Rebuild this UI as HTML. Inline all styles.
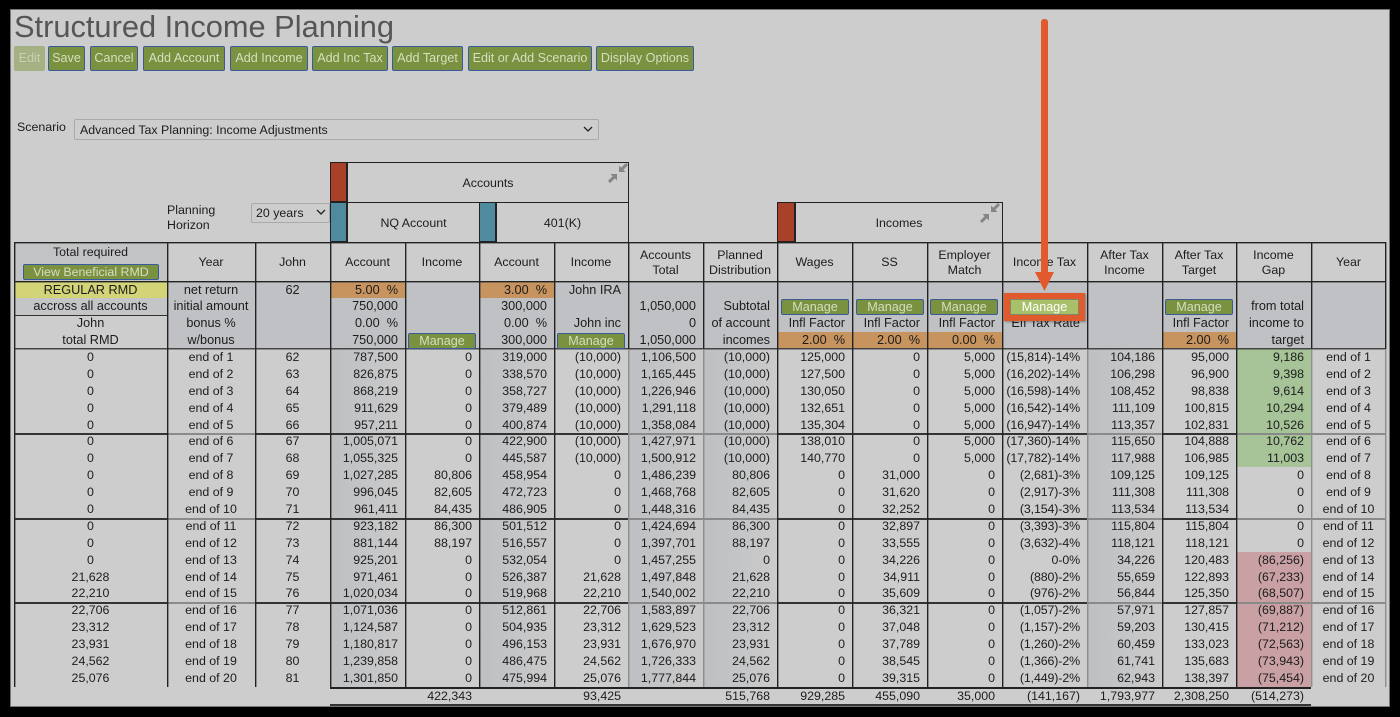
<!DOCTYPE html>
<html><head><meta charset="utf-8"><title>Structured Income Planning</title>
<style>
html,body{margin:0;padding:0;background:#000;width:1400px;height:717px;overflow:hidden}
body{font-family:"Liberation Sans",sans-serif;color:#1c1c1c;font-size:12.4px}
#p{position:absolute;left:11px;top:10px;width:1378px;height:696px;background:#cdcdcd;box-shadow:0 0 0 1px #777}
.a{position:absolute}
#t{position:absolute;left:14px;top:9px;font-size:30.8px;line-height:36px;color:#565656;white-space:nowrap}
.b{position:absolute;box-sizing:border-box;background:#7a9140;border:1.5px solid #3a5a9e;border-radius:2px;color:#d6dfc0;text-align:center;white-space:nowrap}
.top{top:46px;height:25px;line-height:23px;font-size:12.6px}
.m{height:16px;line-height:15px;font-size:12.6px}
.grid{position:absolute;left:14px;display:grid;grid-template-columns:153px 88px 75px 75px 74px 75px 74px 75px 74px 75px 75px 75px 85px 75px 74px 75px 75px;width:1372px}
.grid span{display:block;white-space:nowrap;text-align:right;padding-right:7px;box-sizing:border-box;min-width:0}
.grid span:nth-child(1),.grid span:nth-child(2),.grid span:nth-child(3),.grid span:nth-child(17){text-align:center;padding-right:0}
.d{height:16.9px;line-height:16.9px}
.d span:nth-child(4),.d span:nth-child(6),.d span:nth-child(8),.d span:nth-child(9),.d span:nth-child(14){background:linear-gradient(90deg,#bdbfc2,#cbcbcb)}
.d span:nth-child(13){letter-spacing:-.12px}
.pm{height:17px;line-height:17px;grid-template-rows:17px;font-size:12.7px}
.pm span{background:#bfc1c4}
.pm span:nth-child(1){background:#c4c5c7}
.pm .l{background:#cdcdcd!important}
.pm .y{background:#d3d377!important}
.pm .o{background:#c7935e!important}
.g{background:#a6c498}
.r{background:#c9a1a5}
#h{top:242px;height:39px}
#h span{display:flex;height:39px;align-items:center;justify-content:center;text-align:center;line-height:15px;padding:2px 0 0;background:#cdcdcd}
#h span:first-child{background:#c2c3c5}
.tot{top:688px;height:16px;line-height:17px}
.v{position:absolute;width:1px;background:#222;box-shadow:1px 0 0 rgba(40,40,40,.4)}
.v.n{background:#8e8e8e;box-shadow:1px 0 0 rgba(140,140,140,.4)}
.h{position:absolute;left:14px;width:1372px;height:1px;background:#222;box-shadow:0 1px 0 rgba(40,40,40,.4)}
.gl{box-shadow:none;height:2px;background:linear-gradient(90deg,#333 153px,#8a8a8a 153px,#8a8a8a 241px,#333 241px,#333 614px,#8a8a8a 614px,#8a8a8a 763px,#333 763px,#333 1073px,#8a8a8a 1073px,#8a8a8a 1148px,#333 1148px,#333 1222px,#8a8a8a 1222px)}
.bx{position:absolute;box-sizing:border-box;border:1px solid #222;border-bottom:0;text-align:center;background:#cdcdcd}
.sel{position:absolute;box-sizing:border-box;background:#cdcdcd;border:1.5px solid #aaa;border-radius:2px;white-space:nowrap}
.rw{position:relative;left:0}
</style></head><body>
<div id="p"></div>
<div id="t">Structured Income Planning</div>
<div class="b top" style="left:14px;width:31px;background:#a3b183;border-color:#a3b183;color:#c9d0b4">Edit</div>
<div class="b top" style="left:48px;width:37px">Save</div>
<div class="b top" style="left:90px;width:48px">Cancel</div>
<div class="b top" style="left:143px;width:82px">Add Account</div>
<div class="b top" style="left:230px;width:78px">Add Income</div>
<div class="b top" style="left:312px;width:76px">Add Inc Tax</div>
<div class="b top" style="left:392px;width:71px">Add Target</div>
<div class="b top" style="left:468px;width:124px">Edit or Add Scenario</div>
<div class="b top" style="left:596px;width:98px">Display Options</div>

<div class="a" style="left:17px;top:120px;line-height:15px">Scenario</div>
<div class="sel" style="left:74px;top:119px;width:525px;height:21px;line-height:20px;padding-left:5px">Advanced Tax Planning: Income Adjustments
<svg class="a" style="right:5px;top:6px" width="10" height="7" viewBox="0 0 10 7"><path d="M1 1l4 4 4-4" fill="none" stroke="#222" stroke-width="1.300"/></svg></div>

<div class="a" style="left:167px;top:203px;line-height:15px">Planning<br>Horizon</div>
<div class="sel" style="left:251px;top:203px;width:79px;height:20px;line-height:19px;padding-left:4px">20 years
<svg class="a" style="right:3px;top:5px" width="10" height="7" viewBox="0 0 10 7"><path d="M1 1l4 4 4-4" fill="none" stroke="#222" stroke-width="1.300"/></svg></div>

<div class="bx" style="left:347px;top:162px;width:282px;height:41px;line-height:41px">Accounts</div>
<div class="bx" style="left:347px;top:202px;width:133px;height:41px;line-height:41px">NQ Account</div>
<div class="bx" style="left:496px;top:202px;width:133px;height:41px;line-height:41px">401(K)</div>
<div class="bx" style="left:795px;top:202px;width:208px;height:41px;line-height:41px">Incomes</div>
<div class="a" style="left:330px;top:162px;width:17px;height:40px;background:#a8402a;outline:1px solid #222;outline-offset:-1px"></div>
<div class="a" style="left:330px;top:202px;width:17px;height:40px;background:#4f8a9e;outline:1px solid #222;outline-offset:-1px"></div>
<div class="a" style="left:479px;top:202px;width:17px;height:40px;background:#4f8a9e;outline:1px solid #222;outline-offset:-1px"></div>
<div class="a" style="left:777px;top:202px;width:18px;height:40px;background:#a8402a;outline:1px solid #222;outline-offset:-1px"></div>
<svg class="a" style="left:608px;top:163px" width="20" height="20" viewBox="0 0 20 20"><path d="M1 19l6-6M19 1l-6 6" stroke="#858585" stroke-width="3" fill="none"/><path d="M2.500 11H9v6.500zM17.500 9H11V2.500z" fill="#858585"/></svg>
<svg class="a" style="left:980px;top:203px" width="20" height="20" viewBox="0 0 20 20"><path d="M1 19l6-6M19 1l-6 6" stroke="#858585" stroke-width="3" fill="none"/><path d="M2.500 11H9v6.500zM17.500 9H11V2.500z" fill="#858585"/></svg>

<div class="grid" id="h"><span style="align-items:flex-start;padding-top:3px">Total required</span><span>Year</span><span>John</span><span>Account</span><span>Income</span><span>Account</span><span>Income</span><span>Accounts<br>Total</span><span>Planned<br>Distribution</span><span>Wages</span><span>SS</span><span>Employer<br>Match</span><span>Income Tax</span><span>After Tax<br>Income</span><span>After Tax<br>Target</span><span>Income<br>Gap</span><span>Year</span></div>

<div class="grid pm" style="top:281px;line-height:19px"><span class="y">REGULAR RMD</span><span>net return</span><span>62</span><span class="o">5.00&nbsp;&nbsp;%</span><span></span><span class="o">3.00&nbsp;&nbsp;%</span><span>John IRA</span><span></span><span></span><span></span><span></span><span></span><span></span><span></span><span></span><span></span><span></span></div>
<div class="grid pm" style="top:298px"><span>accross all accounts</span><span>initial amount</span><span></span><span>750,000</span><span></span><span>300,000</span><span></span><span>1,050,000</span><span>Subtotal</span><span></span><span></span><span></span><span></span><span></span><span></span><span>from total</span><span></span></div>
<div class="grid pm" style="top:315px"><span class="l">John</span><span>bonus %</span><span></span><span>0.00&nbsp;&nbsp;%</span><span></span><span>0.00&nbsp;&nbsp;%</span><span>John inc</span><span>0</span><span>of account</span><span>Infl Factor</span><span>Infl Factor</span><span>Infl Factor</span><span>Eff Tax Rate</span><span></span><span>Infl Factor</span><span>income to</span><span></span></div>
<div class="grid pm" style="top:332px"><span class="l">total RMD</span><span>w/bonus</span><span></span><span>750,000</span><span></span><span>300,000</span><span></span><span>1,050,000</span><span>incomes</span><span class="o">2.00&nbsp;&nbsp;%</span><span class="o">2.00&nbsp;&nbsp;%</span><span class="o">0.00&nbsp;&nbsp;%</span><span></span><span></span><span class="o">2.00&nbsp;&nbsp;%</span><span>target</span><span></span></div>

<div class="grid" style="top:349px;display:block">
<div class="grid d rw"><span>0</span><span>end of 1</span><span>62</span><span>787,500</span><span>0</span><span>319,000</span><span>(10,000)</span><span>1,106,500</span><span>(10,000)</span><span>125,000</span><span>0</span><span>5,000</span><span>(15,814)-14%</span><span>104,186</span><span>95,000</span><span class="g">9,186</span><span>end of 1</span></div>
<div class="grid d rw"><span>0</span><span>end of 2</span><span>63</span><span>826,875</span><span>0</span><span>338,570</span><span>(10,000)</span><span>1,165,445</span><span>(10,000)</span><span>127,500</span><span>0</span><span>5,000</span><span>(16,202)-14%</span><span>106,298</span><span>96,900</span><span class="g">9,398</span><span>end of 2</span></div>
<div class="grid d rw"><span>0</span><span>end of 3</span><span>64</span><span>868,219</span><span>0</span><span>358,727</span><span>(10,000)</span><span>1,226,946</span><span>(10,000)</span><span>130,050</span><span>0</span><span>5,000</span><span>(16,598)-14%</span><span>108,452</span><span>98,838</span><span class="g">9,614</span><span>end of 3</span></div>
<div class="grid d rw"><span>0</span><span>end of 4</span><span>65</span><span>911,629</span><span>0</span><span>379,489</span><span>(10,000)</span><span>1,291,118</span><span>(10,000)</span><span>132,651</span><span>0</span><span>5,000</span><span>(16,542)-14%</span><span>111,109</span><span>100,815</span><span class="g">10,294</span><span>end of 4</span></div>
<div class="grid d rw"><span>0</span><span>end of 5</span><span>66</span><span>957,211</span><span>0</span><span>400,874</span><span>(10,000)</span><span>1,358,084</span><span>(10,000)</span><span>135,304</span><span>0</span><span>5,000</span><span>(16,947)-14%</span><span>113,357</span><span>102,831</span><span class="g">10,526</span><span>end of 5</span></div>
<div class="grid d rw"><span>0</span><span>end of 6</span><span>67</span><span>1,005,071</span><span>0</span><span>422,900</span><span>(10,000)</span><span>1,427,971</span><span>(10,000)</span><span>138,010</span><span>0</span><span>5,000</span><span>(17,360)-14%</span><span>115,650</span><span>104,888</span><span class="g">10,762</span><span>end of 6</span></div>
<div class="grid d rw"><span>0</span><span>end of 7</span><span>68</span><span>1,055,325</span><span>0</span><span>445,587</span><span>(10,000)</span><span>1,500,912</span><span>(10,000)</span><span>140,770</span><span>0</span><span>5,000</span><span>(17,782)-14%</span><span>117,988</span><span>106,985</span><span class="g">11,003</span><span>end of 7</span></div>
<div class="grid d rw"><span>0</span><span>end of 8</span><span>69</span><span>1,027,285</span><span>80,806</span><span>458,954</span><span>0</span><span>1,486,239</span><span>80,806</span><span>0</span><span>31,000</span><span>0</span><span>(2,681)-3%</span><span>109,125</span><span>109,125</span><span>0</span><span>end of 8</span></div>
<div class="grid d rw"><span>0</span><span>end of 9</span><span>70</span><span>996,045</span><span>82,605</span><span>472,723</span><span>0</span><span>1,468,768</span><span>82,605</span><span>0</span><span>31,620</span><span>0</span><span>(2,917)-3%</span><span>111,308</span><span>111,308</span><span>0</span><span>end of 9</span></div>
<div class="grid d rw"><span>0</span><span>end of 10</span><span>71</span><span>961,411</span><span>84,435</span><span>486,905</span><span>0</span><span>1,448,316</span><span>84,435</span><span>0</span><span>32,252</span><span>0</span><span>(3,154)-3%</span><span>113,534</span><span>113,534</span><span>0</span><span>end of 10</span></div>
<div class="grid d rw"><span>0</span><span>end of 11</span><span>72</span><span>923,182</span><span>86,300</span><span>501,512</span><span>0</span><span>1,424,694</span><span>86,300</span><span>0</span><span>32,897</span><span>0</span><span>(3,393)-3%</span><span>115,804</span><span>115,804</span><span>0</span><span>end of 11</span></div>
<div class="grid d rw"><span>0</span><span>end of 12</span><span>73</span><span>881,144</span><span>88,197</span><span>516,557</span><span>0</span><span>1,397,701</span><span>88,197</span><span>0</span><span>33,555</span><span>0</span><span>(3,632)-4%</span><span>118,121</span><span>118,121</span><span>0</span><span>end of 12</span></div>
<div class="grid d rw"><span>0</span><span>end of 13</span><span>74</span><span>925,201</span><span>0</span><span>532,054</span><span>0</span><span>1,457,255</span><span>0</span><span>0</span><span>34,226</span><span>0</span><span>0-0%</span><span>34,226</span><span>120,483</span><span class="r">(86,256)</span><span>end of 13</span></div>
<div class="grid d rw"><span>21,628</span><span>end of 14</span><span>75</span><span>971,461</span><span>0</span><span>526,387</span><span>21,628</span><span>1,497,848</span><span>21,628</span><span>0</span><span>34,911</span><span>0</span><span>(880)-2%</span><span>55,659</span><span>122,893</span><span class="r">(67,233)</span><span>end of 14</span></div>
<div class="grid d rw"><span>22,210</span><span>end of 15</span><span>76</span><span>1,020,034</span><span>0</span><span>519,968</span><span>22,210</span><span>1,540,002</span><span>22,210</span><span>0</span><span>35,609</span><span>0</span><span>(976)-2%</span><span>56,844</span><span>125,350</span><span class="r">(68,507)</span><span>end of 15</span></div>
<div class="grid d rw"><span>22,706</span><span>end of 16</span><span>77</span><span>1,071,036</span><span>0</span><span>512,861</span><span>22,706</span><span>1,583,897</span><span>22,706</span><span>0</span><span>36,321</span><span>0</span><span>(1,057)-2%</span><span>57,971</span><span>127,857</span><span class="r">(69,887)</span><span>end of 16</span></div>
<div class="grid d rw"><span>23,312</span><span>end of 17</span><span>78</span><span>1,124,587</span><span>0</span><span>504,935</span><span>23,312</span><span>1,629,523</span><span>23,312</span><span>0</span><span>37,048</span><span>0</span><span>(1,157)-2%</span><span>59,203</span><span>130,415</span><span class="r">(71,212)</span><span>end of 17</span></div>
<div class="grid d rw"><span>23,931</span><span>end of 18</span><span>79</span><span>1,180,817</span><span>0</span><span>496,153</span><span>23,931</span><span>1,676,970</span><span>23,931</span><span>0</span><span>37,789</span><span>0</span><span>(1,260)-2%</span><span>60,459</span><span>133,023</span><span class="r">(72,563)</span><span>end of 18</span></div>
<div class="grid d rw"><span>24,562</span><span>end of 19</span><span>80</span><span>1,239,858</span><span>0</span><span>486,475</span><span>24,562</span><span>1,726,333</span><span>24,562</span><span>0</span><span>38,545</span><span>0</span><span>(1,366)-2%</span><span>61,741</span><span>135,683</span><span class="r">(73,943)</span><span>end of 19</span></div>
<div class="grid d rw"><span>25,076</span><span>end of 20</span><span>81</span><span>1,301,850</span><span>0</span><span>475,994</span><span>25,076</span><span>1,777,844</span><span>25,076</span><span>0</span><span>39,315</span><span>0</span><span>(1,449)-2%</span><span>62,943</span><span>138,397</span><span class="r">(75,454)</span><span>end of 20</span></div>
</div>

<div class="grid tot"><span></span><span></span><span></span><span></span><span>422,343</span><span></span><span>93,425</span><span></span><span>515,768</span><span>929,285</span><span>455,090</span><span></span><span>(141,167)</span><span>1,793,977</span><span>2,308,250</span><span>(514,273)</span><span></span></div>
<div class="a" style="left:927px;top:688px;width:68px;line-height:17px;text-align:right">35,000</div>

<div class="h" style="top:242px"></div>
<div class="h" style="top:281px"></div>
<div class="h" style="top:348px;background:#444"></div>
<div class="a" style="left:14px;top:315px;width:153px;height:1px;background:#333"></div>
<div class="h gl" style="top:433px"></div>
<div class="h gl" style="top:518px"></div>
<div class="h gl" style="top:602px"></div>
<div class="a" style="left:330px;top:687px;width:981px;height:2px;background:#222"></div>
<div class="a" style="left:330px;top:704px;width:981px;height:2px;background:#333"></div>

<div class="v" style="left:14px;top:242px;height:445px"></div>
<div class="v" style="left:167px;top:242px;height:445px"></div>
<div class="v" style="left:255px;top:242px;height:445px"></div>
<div class="v" style="left:330px;top:242px;height:445px"></div>
<div class="v" style="left:405px;top:242px;height:445px"></div>
<div class="v" style="left:479px;top:242px;height:445px"></div>
<div class="v" style="left:554px;top:242px;height:445px"></div>
<div class="v" style="left:628px;top:242px;height:107px"></div>
<div class="v n" style="left:628px;top:349px;height:338px"></div>
<div class="v" style="left:703px;top:242px;height:107px"></div>
<div class="v n" style="left:703px;top:349px;height:338px"></div>
<div class="v" style="left:777px;top:242px;height:445px"></div>
<div class="v" style="left:852px;top:242px;height:445px"></div>
<div class="v" style="left:927px;top:242px;height:445px"></div>
<div class="v" style="left:1002px;top:242px;height:445px"></div>
<div class="v" style="left:1087px;top:242px;height:107px"></div>
<div class="v n" style="left:1087px;top:349px;height:338px"></div>
<div class="v" style="left:1162px;top:242px;height:445px"></div>
<div class="v" style="left:1236px;top:242px;height:445px"></div>
<div class="v" style="left:1311px;top:242px;height:107px"></div>
<div class="v n" style="left:1311px;top:349px;height:338px"></div>
<div class="v" style="left:1385px;top:242px;height:107px"></div>
<div class="v n" style="left:1385px;top:349px;height:338px"></div>

<div class="b" style="left:23px;top:264px;width:136px;height:16px;line-height:15px">View Beneficial RMD</div>
<div class="b m" style="left:408px;top:333px;width:68px">Manage</div>
<div class="b m" style="left:557px;top:333px;width:68px">Manage</div>
<div class="b m" style="left:781px;top:299px;width:68px">Manage</div>
<div class="b m" style="left:856px;top:299px;width:68px">Manage</div>
<div class="b m" style="left:930px;top:299px;width:68px">Manage</div>
<div class="b m" style="left:1165px;top:299px;width:68px">Manage</div>

<div class="a" style="left:1041px;top:19px;width:7px;height:256px;background:#e05a2e;border-radius:3px 3px 0 0"></div>
<svg class="a" style="left:1035px;top:272px" width="19" height="19" viewBox="0 0 19 19"><path d="M0 0H19L9.500 19Z" fill="#e05a2e"/></svg>
<div class="a" style="left:1004px;top:293px;width:81px;height:28px;box-sizing:border-box;border:6px solid #e05a2e;background:#a9c06a;outline:1px solid #7b8a6a;outline-offset:-7px;color:#fff;text-align:center;line-height:17px;font-size:12.6px;box-shadow:1px 1px 2px rgba(0,0,0,.35)">Manage</div>
</body></html>
